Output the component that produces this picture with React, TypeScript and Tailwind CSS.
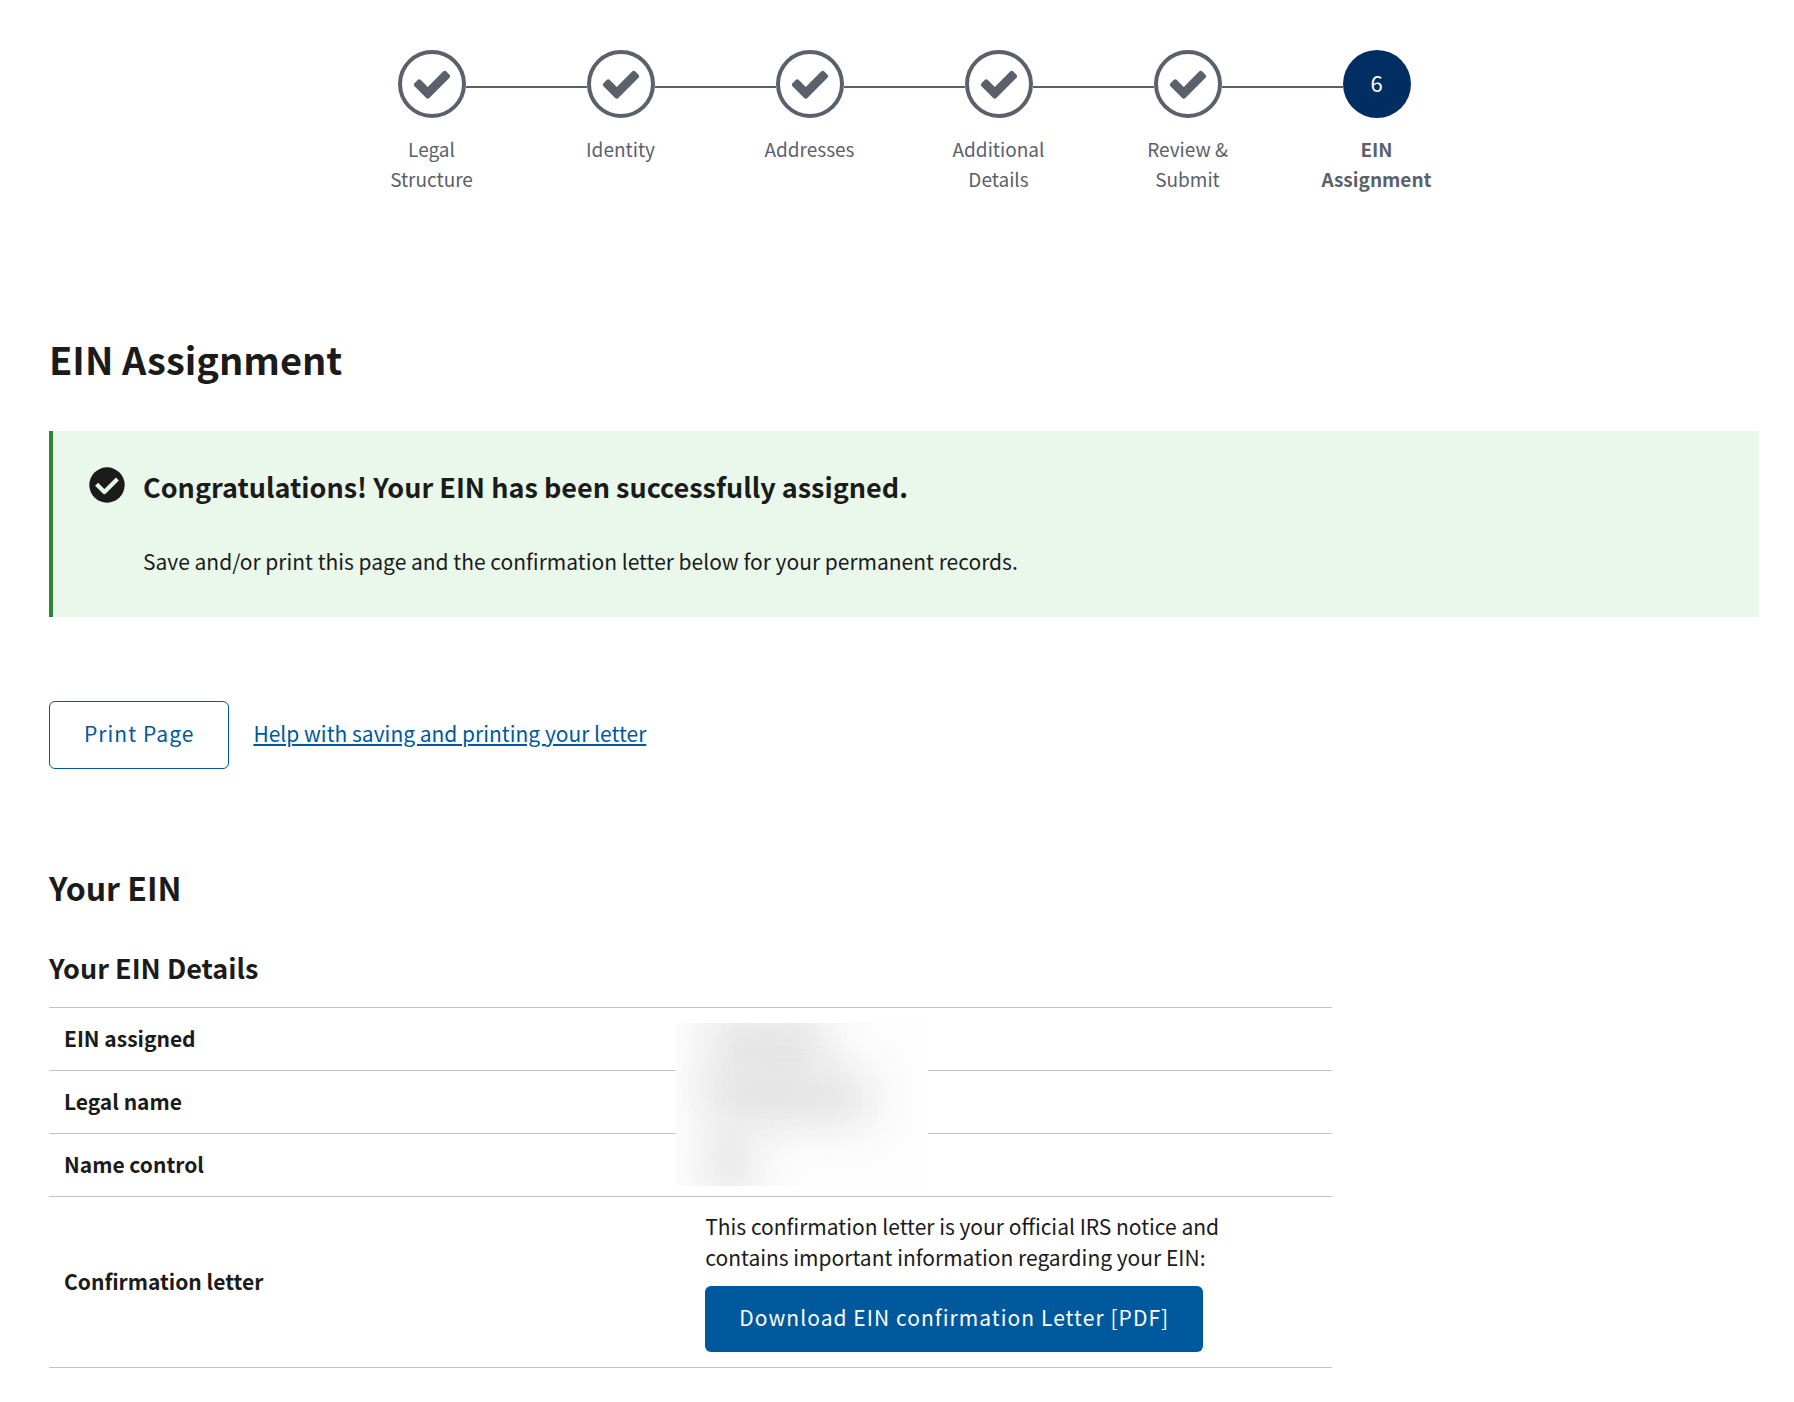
const steps = ["Legal Structure", "Identity", "Addresses", "Additional Details", "Review & Submit", "EIN Assignment"];

function CheckIcon() {
  return (
    <svg viewBox="0 0 1792 1792" className="size-[42px] shrink-0" fill="currentColor" aria-hidden="true">
      <path d="M1671 566q0 40-28 68l-724 724-136 136q-28 28-68 28t-68-28l-136-136-362-362q-28-28-28-68t28-68l136-136q28-28 68-28t68 28l294 295 656-657q28-28 68-28t68 28l136 136q28 28 28 68z" />
    </svg>
  );
}

function SuccessIcon() {
  return (
    <svg viewBox="0 0 36 36" className="size-9 shrink-0" fill="none" aria-hidden="true">
      <circle cx="18" cy="18" r="17.7" fill="currentColor" />
      <path d="M7.6 17.2 15.4 25 28.4 12" stroke="#eaf8eb" strokeWidth="4.2" strokeLinejoin="round" />
    </svg>
  );
}

function Stepper() {
  return (
    <ol className="mx-auto grid max-w-[1134px] grid-cols-6 text-center text-[19px] leading-[30px] text-[#5b616b]">
      {steps.map((label, i) => {
        const current = i === steps.length - 1;
        return (
          <li key={label} aria-current={current ? "step" : undefined} className="flex flex-col items-center">
            <div className="flex w-full items-center">
              <span className={i === 0 ? "flex-1" : "mt-1.5 h-0.5 flex-1 bg-[#5b616b]"} />
              {current ? (
                <span className="flex size-[68px] items-center justify-center rounded-full bg-[#002d62] pb-1 text-[22px] text-white">{i + 1}</span>
              ) : (
                <span className="flex size-[68px] items-center justify-center rounded-full border-4 border-[#5b616b]">
                  <CheckIcon />
                </span>
              )}
              <span className={current ? "flex-1" : "mt-1.5 h-0.5 flex-1 bg-[#5b616b]"} />
            </div>
            <span className={current ? "mt-4 w-[120px] font-bold" : "mt-4 w-[120px]"}>{label}</span>
          </li>
        );
      })}
    </ol>
  );
}

function Redacted() {
  return (
    <div aria-hidden="true" className="absolute top-[15px] -left-[14px] h-[163px] w-[252px] overflow-hidden bg-[#fdfdfd]">
      <div className="absolute -top-4 left-8 h-20 w-[118px] bg-[#e6e6e6] blur-[22px]" />
      <div className="absolute top-[50px] left-8 h-[50px] w-[162px] bg-[#e2e2e2] blur-[22px]" />
      <div className="absolute top-[100px] left-7 h-[76px] w-[52px] bg-[#e8e8e8] blur-[20px]" />
    </div>
  );
}

export default function App() {
  return (
    <main className="min-h-screen bg-white pt-[50px] pr-[35px] pb-[34px] pl-[49px] font-['Noto_Sans_CJK_SC','Noto_Sans',sans-serif] text-[21px] leading-[31px] text-[#1b1b1b]">
      <Stepper />
      <h1 className="mt-[140px] text-[38px] leading-[50px] font-bold">EIN Assignment</h1>
      <section className="mt-[47px] flex gap-[18px] border-l-4 border-[#2e8540] bg-[#eaf8eb] pt-9 pb-10 pl-9">
        <SuccessIcon />
        <div>
          <h2 className="text-[27px] leading-[40px] font-bold">Congratulations! Your EIN has been successfully assigned.</h2>
          <p className="mt-[39px]">Save and/or print this page and the confirmation letter below for your permanent records.</p>
        </div>
      </section>
      <div className="mt-[84px] flex items-center gap-6">
        <button type="button" className="h-[68px] rounded-md border border-[#00599c] px-[34px] pb-1 tracking-wider text-[#00599c]">Print Page</button>
        <a href="#help" className="pb-1 text-[#00599c] underline">Help with saving and printing your letter</a>
      </div>
      <h2 className="mt-24 text-[32px] leading-[44px] font-bold">Your EIN</h2>
      <h3 className="mt-[39px] text-[27px] leading-[40px] font-bold">Your EIN Details</h3>
      <table className="mt-[19px] w-3/4 border-collapse text-left">
        <tbody>
          {["EIN assigned", "Legal name", "Name control"].map((name, i) => (
            <tr key={name} className="h-[63px] border-y border-[#c2c2c2]">
              <th scope="row" className="w-1/2 px-[15px] pb-0.5">{name}</th>
              <td className="relative px-[15px]">{i === 0 && <Redacted />}</td>
            </tr>
          ))}
          <tr className="border-y border-[#c2c2c2]">
            <th scope="row" className="px-[15px] pb-0.5">Confirmation letter</th>
            <td className="px-[15px] pt-3.5 pb-[15px]">
              <p className="max-w-[560px]">This confirmation letter is your official IRS notice and contains important information regarding your EIN:</p>
              <button type="button" className="mt-[13px] h-[66px] rounded-md bg-[#00599c] px-[34px] pb-1 tracking-wider text-white">Download EIN confirmation Letter [PDF]</button>
            </td>
          </tr>
        </tbody>
      </table>
    </main>
  );
}
